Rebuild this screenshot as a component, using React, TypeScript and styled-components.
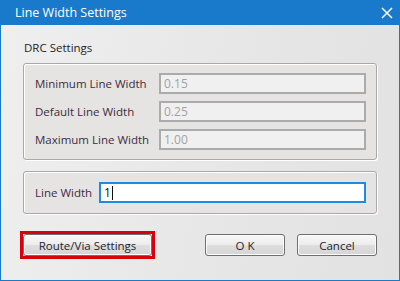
import React from "react";
import styled, { createGlobalStyle } from "styled-components";

const Global = createGlobalStyle`
  html, body { margin: 0; padding: 0; background: #ffffff; }
  * { box-sizing: border-box; }
`;

const Window = styled.div`
  width: 400px;
  height: 281px;
  border: 1px solid #1979ca;
  border-top: none;
  display: flex;
  flex-direction: column;
  font-family: "Open Sans", "Noto Sans", sans-serif;
  font-size: 11.5px;
  color: #1e1e1e;
`;

const TitleBar = styled.div`
  height: 25px;
  flex: none;
  background: #1979ca;
  color: #ffffff;
  display: flex;
  align-items: center;
  justify-content: space-between;
  padding: 0 6px 0 15px;
  margin: 0 -1px;
  font-size: 12.5px;
`;

const CloseIcon = styled.svg`
  width: 12px;
  height: 12px;
  margin-right: 1px;
`;

const Body = styled.div`
  flex: 1;
  background: linear-gradient(100deg, #efefef 0%, #e6e6e6 60%, #e2e2e2 100%);
  padding: 16px 22px 0 22px;
  display: flex;
  flex-direction: column;
`;

const GroupTitle = styled.div`
  height: 22px;
  line-height: 14px;
  padding-left: 1px;
`;

const GroupBox = styled.div<{ $pad: number; $top?: number }>`
  border: 1px solid #a9a9a9;
  border-radius: 3px;
  box-shadow: inset 1px 1px 0 #ffffff, 1px 1px 0 #ffffff;
  background: #e6e3e3;
  margin-top: ${(p) => p.$top ?? 0}px;
  padding: ${(p) => p.$pad}px 10px ${(p) => p.$pad}px 11px;
  display: flex;
  flex-direction: column;
  gap: 6px;
`;

const Row = styled.div`
  display: flex;
  align-items: center;
  height: 21px;
  margin-bottom: 1px;
  &:last-child { margin-bottom: 0; }
`;

const Label = styled.div<{ $w: number }>`
  width: ${(p) => p.$w}px;
  flex: none;
  color: #3c2d40;
`;

const Field = styled.div<{ $active?: boolean }>`
  flex: 1;
  height: 21px;
  border: ${(p) => (p.$active ? "2px solid #1e8be0" : "2px solid #ababab")};
  background: ${(p) => (p.$active ? "#ffffff" : "#f0f0f0")};
  color: ${(p) => (p.$active ? "#111" : "#a2a2a2")};
  display: flex;
  align-items: center;
  padding-left: 3px;
  font-size: 12px;
`;

const Caret = styled.span`
  display: inline-block;
  width: 1px;
  height: 14px;
  background: #111;
  margin-left: 1px;
`;

const ButtonBar = styled.div`
  display: flex;
  align-items: center;
  margin-top: 17px;
  margin-left: -3px;
`;

const Highlight = styled.div`
  flex: none;
  border: 3px solid #d9000d;
  margin-right: 50px;
`;

const Button = styled.div<{ $w: number; $gap?: number }>`
  flex: none;
  width: ${(p) => p.$w}px;
  height: 22px;
  border: 1px solid #6f6f6f;
  border-radius: 3px;
  background: linear-gradient(#f8f8f8 0%, #ececec 50%, #dedede 51%, #d5d5d5 100%);
  box-shadow: inset 0 0 0 1px #fbfbfb;
  display: flex;
  align-items: center;
  justify-content: center;
  color: #1e1e30;
  font-size: 11.5px;
  margin-right: ${(p) => p.$gap ?? 0}px;
`;

const fields = [
  ["Minimum Line Width", "0.15"],
  ["Default Line Width", "0.25"],
  ["Maximum Line Width", "1.00"],
];

export default function App() {
  return (
    <>
      <Global />
      <Window>
        <TitleBar>
          <span>Line Width Settings</span>
          <CloseIcon viewBox="0 0 12 12">
            <path d="M1 1 L11 11 M11 1 L1 11" stroke="#fff" strokeWidth="1.5" />
          </CloseIcon>
        </TitleBar>
        <Body>
          <GroupTitle>DRC Settings</GroupTitle>
          <GroupBox $pad={9}>
            {fields.map(([l, v]) => (
              <Row key={l}>
                <Label $w={124}>{l}</Label>
                <Field>{v}</Field>
              </Row>
            ))}
          </GroupBox>
          <GroupBox $pad={10} $top={11}>
            <Row>
              <Label $w={64}>Line Width</Label>
              <Field $active>
                1<Caret />
              </Field>
            </Row>
          </GroupBox>
          <ButtonBar>
            <Highlight>
              <Button $w={129}>Route/Via Settings</Button>
            </Highlight>
            <Button $w={80} $gap={12}>O K</Button>
            <Button $w={80}>Cancel</Button>
          </ButtonBar>
        </Body>
      </Window>
    </>
  );
}
